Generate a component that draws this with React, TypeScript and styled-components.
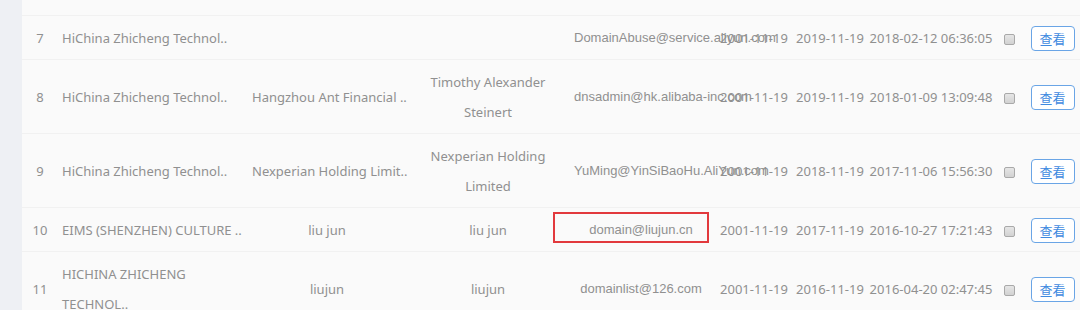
import React from "react";
import styled, { createGlobalStyle } from "styled-components";

const GlobalStyle = createGlobalStyle`
  html, body { margin: 0; padding: 0; background: #fafafa; overflow: hidden; }
  body { font-family: "Noto Sans", "Noto Sans CJK SC", sans-serif; }
`;

const Page = styled.div`
  display: flex;
  width: 1080px;
  height: 310px;
  overflow: hidden;
`;

const SideStrip = styled.div`
  flex: 0 0 22px;
  background: #eef0f4;
`;

const TableArea = styled.div`
  flex: 1 1 auto;
  padding-top: 15px;
  background: #fafafa;
  overflow: hidden;
`;

const Table = styled.table`
  table-layout: fixed;
  border-collapse: collapse;
  width: 1063px;
  border-top: 1px solid #f1f1f1;
`;

const Row = styled.tr`
  border-bottom: 1px solid #f1f1f1;
`;

const Cell = styled.td<{ $align?: "left" | "center"; $pl?: number; $pr?: number; $mono?: boolean }>`
  padding: 7px ${(p) => p.$pr ?? 4}px 6px ${(p) => p.$pl ?? 4}px;
  line-height: 30px;
  font-size: 13px;
  color: #909090;
  text-align: ${(p) => p.$align ?? "center"};
  vertical-align: middle;
  font-family: ${(p) => (p.$mono ? '"Liberation Sans", Arial, sans-serif' : '"Noto Sans", "Noto Sans CJK SC", sans-serif')};
  white-space: normal;
  word-break: normal;
`;

const Text = styled.span<{ $wrap?: boolean }>`
  white-space: ${(p) => (p.$wrap ? "normal" : "nowrap")};
`;

const Highlight = styled.span`
  position: relative;
  display: inline-block;
  line-height: 30px;
  &::before {
    content: "";
    position: absolute;
    left: -36px;
    right: -16px;
    top: -3px;
    bottom: 2px;
    border: 2px solid #e2393d;
  }
`;

const Check = styled.span`
  display: inline-block;
  width: 9px;
  height: 9px;
  border: 1px solid #a9a9a9;
  border-radius: 2px;
  background: linear-gradient(#e6e6e6, #d2d2d2);
  vertical-align: middle;
`;

const ViewButton = styled.button`
  display: block;
  margin: 0 auto;
  width: 44px;
  height: 25px;
  padding: 0;
  border: 1px solid #6aa5e6;
  border-radius: 4px;
  background: #ffffff;
  color: #3f8ae0;
  font-size: 13px;
  font-family: "Noto Sans CJK SC", "Noto Sans", sans-serif;
  line-height: 23px;
  cursor: pointer;
`;

type RowData = {
  idx: number;
  org: string;
  orgWrap?: boolean;
  org2: string;
  contact: string;
  email: string;
  reg: string;
  exp: string;
  upd: string;
  mark?: boolean;
};

const rows: RowData[] = [
  { idx: 7, org: "HiChina Zhicheng Technol..", org2: "", contact: "", email: "DomainAbuse@service.aliyun.com", reg: "2001-11-19", exp: "2019-11-19", upd: "2018-02-12 06:36:05" },
  { idx: 8, org: "HiChina Zhicheng Technol..", org2: "Hangzhou Ant Financial ..", contact: "Timothy Alexander Steinert", email: "dnsadmin@hk.alibaba-inc.com", reg: "2001-11-19", exp: "2019-11-19", upd: "2018-01-09 13:09:48" },
  { idx: 9, org: "HiChina Zhicheng Technol..", org2: "Nexperian Holding Limit..", contact: "Nexperian Holding Limited", email: "YuMing@YinSiBaoHu.AliYun.com", reg: "2001-11-19", exp: "2018-11-19", upd: "2017-11-06 15:56:30" },
  { idx: 10, org: "EIMS (SHENZHEN) CULTURE ..", org2: "liu jun", contact: "liu jun", email: "domain@liujun.cn", reg: "2001-11-19", exp: "2017-11-19", upd: "2016-10-27 17:21:43", mark: true },
  { idx: 11, org: "HICHINA ZHICHENG TECHNOL..", orgWrap: true, org2: "liujun", contact: "liujun", email: "domainlist@126.com", reg: "2001-11-19", exp: "2016-11-19", upd: "2016-04-20 02:47:45" },
];

const widths = [36, 190, 158, 164, 142, 84, 68, 134, 22, 65];

export default function App() {
  return (
    <>
      <GlobalStyle />
      <Page>
        <SideStrip />
        <TableArea>
          <Table>
            <colgroup>
              {widths.map((w, i) => (
                <col key={i} style={{ width: w }} />
              ))}
            </colgroup>
            <tbody>
              {rows.map((r) => (
                <Row key={r.idx}>
                  <Cell>{r.idx}</Cell>
                  <Cell $align="left" $pl={4} $pr={8}><Text $wrap={r.orgWrap}>{r.org}</Text></Cell>
                  <Cell><Text>{r.org2}</Text></Cell>
                  <Cell $pl={8} $pr={8}><Text $wrap>{r.contact}</Text></Cell>
                  <Cell $mono>
                    {r.mark ? <Highlight>{r.email}</Highlight> : <Text>{r.email}</Text>}
                  </Cell>
                  <Cell $pl={0} $pr={0}><Text>{r.reg}</Text></Cell>
                  <Cell $pl={0} $pr={0}><Text>{r.exp}</Text></Cell>
                  <Cell $pl={0} $pr={0}><Text>{r.upd}</Text></Cell>
                  <Cell $pl={0} $pr={0}><Check /></Cell>
                  <Cell $pl={0} $pr={0}><ViewButton>查看</ViewButton></Cell>
                </Row>
              ))}
            </tbody>
          </Table>
        </TableArea>
      </Page>
    </>
  );
}
